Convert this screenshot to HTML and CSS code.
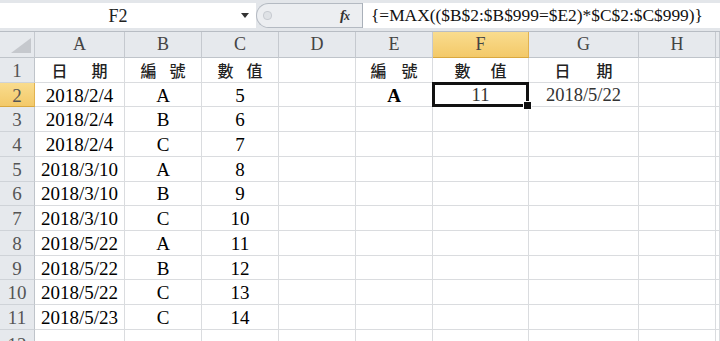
FILE: index.html
```html
<!DOCTYPE html>
<html lang="zh-Hant">
<head>
<meta charset="utf-8">
<title>Excel MAX</title>
<link rel="stylesheet" href="styles.css">
</head>
<body>
<div class="app">
  <div class="fbar">
    <div class="namebox"><span class="name">F2</span><span class="arrow"></span></div>
    <div class="pill"><span class="knob"></span><span class="fx">f<span class="x">x</span></span></div>
    <div class="formula">{=MAX(($B$2:$B$999=$E2)*$C$2:$C$999)}</div>
  </div>
  <div class="sheet">
    <div class="ch corner"><span class="tri"></span></div>
    <div class="ch">A</div><div class="ch">B</div><div class="ch">C</div><div class="ch">D</div>
    <div class="ch">E</div><div class="ch hl">F</div><div class="ch">G</div><div class="ch">H</div><div class="ch"></div>

    <div class="rh">1</div>
    <div class="c cjk"><span class="w1">日</span><span>期</span></div>
    <div class="c cjk"><span class="w2">編</span><span>號</span></div>
    <div class="c cjk"><span class="w2">數</span><span>值</span></div>
    <div class="c"></div>
    <div class="c cjk"><span class="w3">編</span><span>號</span></div>
    <div class="c cjk"><span class="w4">數</span><span>值</span></div>
    <div class="c cjk"><span class="w5">日</span><span>期</span></div>
    <div class="c"></div><div class="c"></div>

    <div class="rh hl">2</div>
    <div class="c">2018/2/4</div><div class="c">A</div><div class="c">5</div><div class="c"></div>
    <div class="c bold">A</div><div class="c sel soft">11</div><div class="c soft">2018/5/22</div><div class="c"></div><div class="c"></div>

    <div class="rh">3</div>
    <div class="c">2018/2/4</div><div class="c">B</div><div class="c">6</div><div class="c"></div>
    <div class="c"></div><div class="c"></div><div class="c"></div><div class="c"></div><div class="c"></div>

    <div class="rh">4</div>
    <div class="c">2018/2/4</div><div class="c">C</div><div class="c">7</div><div class="c"></div>
    <div class="c"></div><div class="c"></div><div class="c"></div><div class="c"></div><div class="c"></div>

    <div class="rh">5</div>
    <div class="c">2018/3/10</div><div class="c">A</div><div class="c">8</div><div class="c"></div>
    <div class="c"></div><div class="c"></div><div class="c"></div><div class="c"></div><div class="c"></div>

    <div class="rh">6</div>
    <div class="c">2018/3/10</div><div class="c">B</div><div class="c">9</div><div class="c"></div>
    <div class="c"></div><div class="c"></div><div class="c"></div><div class="c"></div><div class="c"></div>

    <div class="rh">7</div>
    <div class="c">2018/3/10</div><div class="c">C</div><div class="c">10</div><div class="c"></div>
    <div class="c"></div><div class="c"></div><div class="c"></div><div class="c"></div><div class="c"></div>

    <div class="rh">8</div>
    <div class="c">2018/5/22</div><div class="c">A</div><div class="c">11</div><div class="c"></div>
    <div class="c"></div><div class="c"></div><div class="c"></div><div class="c"></div><div class="c"></div>

    <div class="rh">9</div>
    <div class="c">2018/5/22</div><div class="c">B</div><div class="c">12</div><div class="c"></div>
    <div class="c"></div><div class="c"></div><div class="c"></div><div class="c"></div><div class="c"></div>

    <div class="rh">10</div>
    <div class="c">2018/5/22</div><div class="c">C</div><div class="c">13</div><div class="c"></div>
    <div class="c"></div><div class="c"></div><div class="c"></div><div class="c"></div><div class="c"></div>

    <div class="rh">11</div>
    <div class="c">2018/5/23</div><div class="c">C</div><div class="c">14</div><div class="c"></div>
    <div class="c"></div><div class="c"></div><div class="c"></div><div class="c"></div><div class="c"></div>

    <div class="rh">12</div>
    <div class="c"></div><div class="c"></div><div class="c"></div><div class="c"></div>
    <div class="c"></div><div class="c"></div><div class="c"></div><div class="c"></div><div class="c"></div>
  </div>
</div>
</body>
</html>
```

FILE: styles.css
```css
* { box-sizing: border-box; }
html, body { margin: 0; padding: 0; }
body {
  width: 720px;
  height: 341px;
  overflow: hidden;
  background: #fff;
  font-family: "Liberation Serif", "Times New Roman", serif;
}
.app { width: 720px; height: 341px; overflow: hidden; }

.fbar {
  height: 32px;
  background: #e3e6ea;
  padding-top: 3px;
  display: flex;
  align-items: flex-start;
  border-bottom: 1px solid #b8bdc4;
}
.namebox {
  width: 256px;
  height: 25px;
  background: #fff;
  display: flex;
  align-items: center;
}
.name {
  width: 236px;
  text-align: center;
  font-size: 18px;
  color: #222;
  padding-top: 1px;
}
.arrow {
  width: 0; height: 0;
  margin-left: 5px;
  border-left: 4px solid transparent;
  border-right: 4px solid transparent;
  border-top: 5px solid #333;
}
.pill {
  width: 106px;
  height: 25px;
  background: #eceef1;
  border: 1px solid #b4bac2;
  border-right: none;
  border-radius: 13px 0 0 13px;
  display: flex;
  align-items: center;
  padding-left: 6px;
}
.knob {
  width: 9px;
  height: 9px;
  border-radius: 4px;
  background: #dfe2e6;
  border: 1px solid #c7cbd1;
}
.fx {
  margin-left: 68px;
  font-style: italic;
  font-weight: bold;
  font-size: 15px;
  color: #333;
  letter-spacing: -1px;
}
.fx .x { font-size: 12px; }
.formula {
  flex: 1;
  height: 25px;
  background: #fff;
  border-left: 1px solid #a9b0b9;
  padding-left: 8px;
  font-size: 17.4px;
  line-height: 25px;
  color: #111;
  white-space: nowrap;
}

.sheet {
  display: grid;
  grid-template-columns: 35px 90px 77px 77px 77px 77px 96px 110px 77px 4px;
  grid-template-rows: 26px repeat(11, 24.73px) 30px;
}
.ch {
  background: #e6e9ed;
  border-right: 1px solid #c5c9cf;
  border-bottom: 1px solid #bfc4ca;
  display: flex;
  align-items: center;
  justify-content: center;
  font-size: 18px;
  color: #444;
}
.ch.hl, .rh.hl {
  background: linear-gradient(#f9dc8e, #f3c969);
  border-right-color: #e1b24f;
  border-bottom-color: #d9a83f;
}
.corner { position: relative; }
.tri {
  position: absolute;
  right: 3px;
  bottom: 4px;
  width: 20px;
  height: 15px;
  background: #c5c8cd;
  clip-path: polygon(100% 0, 100% 100%, 0 100%);
}
.rh {
  background: #e6e9ed;
  border-right: 1px solid #bfc4ca;
  border-bottom: 1px solid #cfd3d8;
  display: flex;
  align-items: center;
  justify-content: center;
  font-size: 19px;
  color: #555;
  padding-top: 2px;
}
.c {
  border-right: 1px solid #dadcdf;
  border-bottom: 1px solid #dadcdf;
  display: flex;
  align-items: center;
  justify-content: center;
  font-size: 19px;
  color: #000;
  padding-top: 2px;
  white-space: nowrap;
}
.c.bold { font-weight: bold; }
.c.soft { color: #333; font-size: 18.5px; }
.cjk {
  font-family: "Noto Sans CJK TC", "Noto Sans CJK SC", sans-serif;
  font-size: 16px;
  font-weight: 500;
  color: #222;
  padding-top: 0;
}
.w1 { margin-right: 24px; }
.w2 { margin-right: 13px; }
.w3 { margin-right: 15px; }
.w4 { margin-right: 20px; }
.w5 { margin-right: 26px; }
.sel { position: relative; }
.sel::before {
  content: "";
  position: absolute;
  left: -1px;
  top: -1px;
  right: -1px;
  bottom: -1px;
  border: 3px solid #111;
}
.sel::after {
  content: "";
  position: absolute;
  right: -4px;
  bottom: -4px;
  width: 7px;
  height: 7px;
  background: #111;
  border: 1px solid #fff;
}
```
